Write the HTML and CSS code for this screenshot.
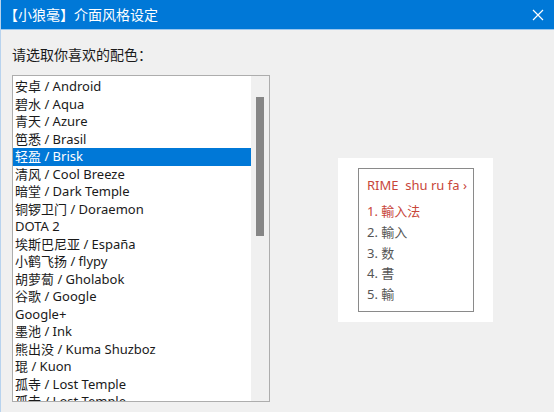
FILE: index.html
```html
<!DOCTYPE html>
<html lang="zh">
<head>
<meta charset="utf-8">
<title>介面风格设定</title>
<link rel="stylesheet" href="styles.css">
</head>
<body>
<div class="window">
  <div class="titlebar">
    <span class="title">【小狼毫】介面风格设定</span>
    <svg class="close" width="12" height="12" viewBox="0 0 12 12"><path d="M1 1 L11 11 M11 1 L1 11" stroke="#fff" stroke-width="1.2" fill="none"/></svg>
  </div>
  <div class="content">
    <div class="label">请选取你喜欢的配色：</div>
    <div class="main">
      <div class="listbox">
        <ul class="items">
          <li>安卓 / Android</li>
          <li>碧水 / Aqua</li>
          <li>青天 / Azure</li>
          <li>笆悉 / Brasil</li>
          <li class="selected">轻盈 / Brisk</li>
          <li>清风 / Cool Breeze</li>
          <li>暗堂 / Dark Temple</li>
          <li>铜锣卫门 / Doraemon</li>
          <li>DOTA 2</li>
          <li>埃斯巴尼亚 / España</li>
          <li>小鹤飞扬 / flypy</li>
          <li>胡萝蔔 / Gholabok</li>
          <li>谷歌 / Google</li>
          <li>Google+</li>
          <li>墨池 / Ink</li>
          <li>熊出没 / Kuma Shuzboz</li>
          <li>琨 / Kuon</li>
          <li>孤寺 / Lost Temple</li>
          <li>孤寺 / Lost Temple</li>
        </ul>
        <div class="scrollbar"><div class="thumb"></div></div>
      </div>
      <div class="preview">
        <div class="candidates">
          <div class="preedit">RIME&nbsp;&nbsp;shu ru fa ›</div>
          <div class="cand hl">1. 輸入法</div>
          <div class="cand">2. 輸入</div>
          <div class="cand">3. 数</div>
          <div class="cand">4. 書</div>
          <div class="cand">5. 輸</div>
        </div>
      </div>
    </div>
  </div>
</div>
</body>
</html>
```

FILE: styles.css
```css
html, body {
  margin: 0;
  padding: 0;
}
body {
  width: 554px;
  height: 412px;
  overflow: hidden;
  background: #f0f0f0;
  font-family: "Noto Sans", "Noto Sans CJK SC", sans-serif;
  color: #1a1a1a;
}
.window {
  height: 412px;
  border-left: 1px solid #b8d3ee;
  box-sizing: border-box;
}
.titlebar {
  height: 29px;
  background: #0078d7;
  border-bottom: 1px solid #9cc7ee;
  display: flex;
  align-items: center;
  justify-content: space-between;
  padding: 0 10px 0 3px;
}
.title {
  color: #fff;
  font-size: 14px;
  font-family: "Noto Sans CJK SC", sans-serif;
  line-height: 29px;
}
.close {
  display: block;
}
.content {
  padding: 14px 0 0 11px;
}
.label {
  font-size: 14px;
  font-family: "Noto Sans CJK SC", sans-serif;
  line-height: 20px;
  height: 20px;
  margin-bottom: 11px;
}
.main {
  display: flex;
}
.listbox {
  width: 258px;
  height: 327px;
  box-sizing: border-box;
  border: 1px solid #adadad;
  background: #fff;
  display: flex;
  overflow: hidden;
}
.items {
  list-style: none;
  margin: 0;
  padding: 2px 0 0 0;
  width: 238px;
  overflow: hidden;
}
.items li {
  height: 17.5px;
  line-height: 17.5px;
  font-size: 13px;
  padding-left: 2px;
  white-space: nowrap;
  color: #1a1a1a;
}
.items li.selected {
  background: #0078d7;
  color: #fff;
}
.scrollbar {
  width: 18px;
  background: #f0f0f0;
}
.thumb {
  width: 8px;
  height: 139px;
  margin: 21px 0 0 5px;
  background: #868686;
}
.preview {
  margin: 83px 0 0 68px;
  width: 155px;
  height: 164px;
  background: #fff;
  padding: 10px 19px 10px 20px;
  box-sizing: border-box;
}
.candidates {
  height: 144px;
  border: 1px solid #8a8a8a;
  box-sizing: border-box;
  padding: 7px 0 0 8px;
  font-size: 13px;
  color: #555;
}
.preedit {
  color: #c8463a;
  line-height: 18px;
  margin-bottom: 7px;
  white-space: nowrap;
}
.cand {
  line-height: 20.75px;
  height: 20.75px;
}
.cand.hl {
  color: #c8463a;
}
```
